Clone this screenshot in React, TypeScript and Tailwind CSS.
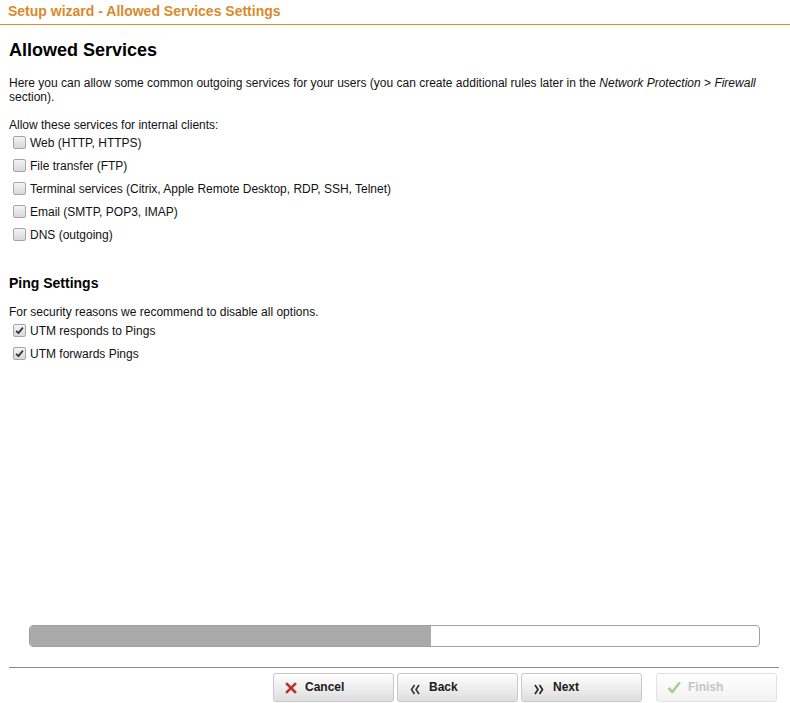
import React, { useState } from 'react';

const Box: React.FC<{ checked: boolean }> = ({ checked }) => (
  <span className="w-[13px] h-[13px] rounded-[2px] border border-[#a6a6a6] bg-gradient-to-b from-[#f4f4f4] to-[#d8d8d8] flex items-center justify-center shrink-0">
    {checked && (
      <svg viewBox="0 0 10 10" className="w-[9px] h-[9px]">
        <path d="M1.3 5.4 L3.8 7.9 L8.8 1.8" fill="none" stroke="#333" strokeWidth={1.9} strokeLinejoin="round" />
      </svg>
    )}
  </span>
);

const Row: React.FC<{ label: string; checked: boolean; onToggle: () => void }> = ({ label, checked, onToggle }) => (
  <label className="flex items-center h-[23px] pl-[4px] gap-[4px] cursor-pointer" onClick={onToggle}>
    <Box checked={checked} />
    <span>{label}</span>
  </label>
);

const WizButton: React.FC<{ icon: React.ReactNode; label: string; disabled?: boolean }> = ({ icon, label, disabled }) => (
  <button
    className={`w-[121px] h-[29px] rounded-[3px] border flex items-center pl-[10px] gap-[7px] text-[12px] leading-[14px] font-bold ${
      disabled
        ? 'border-[#e2e2e2] bg-gradient-to-b from-[#ffffff] to-[#f2f2f2] text-[#c4c4c4]'
        : 'border-[#c8c8c8] bg-gradient-to-b from-[#ffffff] to-[#dedede] text-[#1a1a1a]'
    }`}
  >
    <span className="w-[14px] flex items-center justify-center">{icon}</span>
    <span className="-mt-[2px]">{label}</span>
  </button>
);

export default function App() {
  const [services, setServices] = useState([false, false, false, false, false]);
  const [ping, setPing] = useState([true, true]);

  const serviceLabels = [
    'Web (HTTP, HTTPS)',
    'File transfer (FTP)',
    'Terminal services (Citrix, Apple Remote Desktop, RDP, SSH, Telnet)',
    'Email (SMTP, POP3, IMAP)',
    'DNS (outgoing)',
  ];
  const pingLabels = ['UTM responds to Pings', 'UTM forwards Pings'];

  return (
    <div className="h-[703px] w-[790px] flex flex-col bg-white text-[#111] text-[12px] font-['Liberation_Sans',Arial,sans-serif] overflow-hidden">
      {/* Header */}
      <div className="h-[25px] border-b border-[#dc8c2c] px-[8px] text-[14px] leading-[22px] font-bold text-[#d98a2c]">
        Setup wizard - Allowed Services Settings
      </div>

      {/* Content */}
      <div className="flex-1 px-[9px]">
        <h1 className="mt-[14px] text-[18px] leading-[22px] font-bold text-black">Allowed Services</h1>
        <p className="mt-[15px] leading-[14px] pr-[20px]">
          Here you can allow some common outgoing services for your users (you can create additional rules later in the{' '}
          <i>Network Protection</i> &gt; <i>Firewall</i> section).
        </p>
        <p className="mt-[14px] leading-[14px]">Allow these services for internal clients:</p>
        <div className="-mt-[1px]">
          {serviceLabels.map((l, i) => (
            <Row
              key={l}
              label={l}
              checked={services[i]}
              onToggle={() => setServices(s => s.map((v, j) => (j === i ? !v : v)))}
            />
          ))}
        </div>

        <h2 className="mt-[28px] text-[14px] leading-[18px] font-bold text-black">Ping Settings</h2>
        <p className="mt-[13px] leading-[14px]">For security reasons we recommend to disable all options.</p>
        <div>
          {pingLabels.map((l, i) => (
            <Row
              key={l}
              label={l}
              checked={ping[i]}
              onToggle={() => setPing(s => s.map((v, j) => (j === i ? !v : v)))}
            />
          ))}
        </div>
      </div>

      {/* Footer */}
      <div className="pl-[29px] pr-[30px]">
        <div className="h-[22px] rounded-[4px] border border-[#a0a0a0] bg-white overflow-hidden flex">
          <div className="h-full w-[55%] bg-[#aaaaaa]" />
        </div>
      </div>
      <div className="mt-[20px] ml-[9px] mr-[11px] border-t border-[#8a8a8a]" />
      <div className="mt-[5px] mb-[1px] flex justify-end pr-[13px]">
        <div className="flex gap-[3px]">
          <WizButton
            label="Cancel"
            icon={
              <svg viewBox="0 0 12 12" className="w-[12px] h-[12px]">
                <path d="M2 2 L10 10 M10 2 L2 10" stroke="#b8332a" strokeWidth={2.6} strokeLinecap="square" />
              </svg>
            }
          />
          <WizButton
            label="Back"
            icon={
              <svg viewBox="0 0 12 12" className="w-[12px] h-[12px] mt-[3px]">
                <path d="M5.5 2 L2.5 6.5 L5.5 11 M10 2 L7 6.5 L10 11" fill="none" stroke="#333" strokeWidth={1.6} />
              </svg>
            }
          />
          <WizButton
            label="Next"
            icon={
              <svg viewBox="0 0 12 12" className="w-[12px] h-[12px] mt-[3px]">
                <path d="M2 2 L5 6.5 L2 11 M6.5 2 L9.5 6.5 L6.5 11" fill="none" stroke="#222" strokeWidth={1.6} />
              </svg>
            }
          />
        </div>
        <div className="ml-[14px]">
          <WizButton
            disabled
            label="Finish"
            icon={
              <svg viewBox="0 0 14 14" className="w-[15px] h-[15px]">
                <path d="M1.5 7.5 L5.3 11.5 L12.8 2" fill="none" stroke="#a3cf8f" strokeWidth={2.6} strokeLinejoin="round" />
              </svg>
            }
          />
        </div>
      </div>
    </div>
  );
}
